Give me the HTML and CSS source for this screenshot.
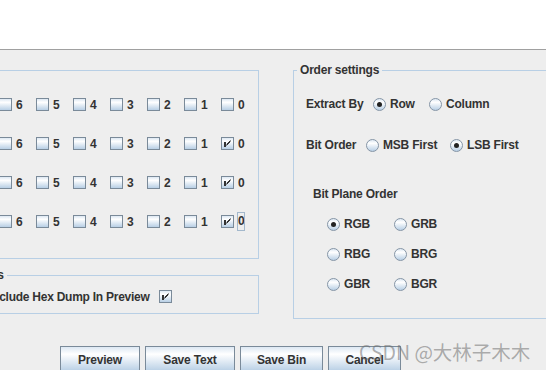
FILE: index.html
```html
<!DOCTYPE html>
<html lang="en">
<head>
    <meta charset="UTF-8">
    <meta name="viewport" content="width=device-width, initial-scale=1.0">
    <title>Extract Preview</title>
    <link rel="stylesheet" href="styles.css">
</head>
<body>
    <div class="preview"></div>

    <div class="settings">
        <div class="left-col">
            <div class="group bit-planes">
                <span class="group-title">Bit Planes</span>
                <div class="plane-row">
                    <span class="plane-name">Alpha</span>
                    <span class="bit"><span class="check"></span>7</span>
                    <span class="bit"><span class="check"></span>6</span>
                    <span class="bit"><span class="check"></span>5</span>
                    <span class="bit"><span class="check"></span>4</span>
                    <span class="bit"><span class="check"></span>3</span>
                    <span class="bit"><span class="check"></span>2</span>
                    <span class="bit"><span class="check"></span>1</span>
                    <span class="bit"><span class="check"></span>0</span>
                </div>
                <div class="plane-row">
                    <span class="plane-name">Red</span>
                    <span class="bit"><span class="check"></span>7</span>
                    <span class="bit"><span class="check"></span>6</span>
                    <span class="bit"><span class="check"></span>5</span>
                    <span class="bit"><span class="check"></span>4</span>
                    <span class="bit"><span class="check"></span>3</span>
                    <span class="bit"><span class="check"></span>2</span>
                    <span class="bit"><span class="check"></span>1</span>
                    <span class="bit"><span class="check"><svg width="11" height="11" viewBox="0 0 11 11"><path d="M2 4h2v5H2z" fill="#333"/><path d="M8.5 2.5L4.5 6.5M8.5 3.5L4.5 7.5" stroke="#333" fill="none"/></svg></span>0</span>
                </div>
                <div class="plane-row">
                    <span class="plane-name">Green</span>
                    <span class="bit"><span class="check"></span>7</span>
                    <span class="bit"><span class="check"></span>6</span>
                    <span class="bit"><span class="check"></span>5</span>
                    <span class="bit"><span class="check"></span>4</span>
                    <span class="bit"><span class="check"></span>3</span>
                    <span class="bit"><span class="check"></span>2</span>
                    <span class="bit"><span class="check"></span>1</span>
                    <span class="bit"><span class="check"><svg width="11" height="11" viewBox="0 0 11 11"><path d="M2 4h2v5H2z" fill="#333"/><path d="M8.5 2.5L4.5 6.5M8.5 3.5L4.5 7.5" stroke="#333" fill="none"/></svg></span>0</span>
                </div>
                <div class="plane-row">
                    <span class="plane-name">Blue</span>
                    <span class="bit"><span class="check"></span>7</span>
                    <span class="bit"><span class="check"></span>6</span>
                    <span class="bit"><span class="check"></span>5</span>
                    <span class="bit"><span class="check"></span>4</span>
                    <span class="bit"><span class="check"></span>3</span>
                    <span class="bit"><span class="check"></span>2</span>
                    <span class="bit"><span class="check"></span>1</span>
                    <span class="bit"><span class="check"><svg width="11" height="11" viewBox="0 0 11 11"><path d="M2 4h2v5H2z" fill="#333"/><path d="M8.5 2.5L4.5 6.5M8.5 3.5L4.5 7.5" stroke="#333" fill="none"/></svg></span><span class="focused">0</span></span>
                </div>
            </div>

            <div class="group preview-settings">
                <span class="group-title">Preview Settings</span>
                <span class="hex-label">Include Hex Dump In Preview</span>
                <span class="check"><svg width="11" height="11" viewBox="0 0 11 11"><path d="M2 4h2v5H2z" fill="#333"/><path d="M8.5 2.5L4.5 6.5M8.5 3.5L4.5 7.5" stroke="#333" fill="none"/></svg></span>
            </div>
        </div>

        <div class="group order-settings">
            <span class="group-title">Order settings</span>
            <div class="order-row">
                <span class="order-label extract-label">Extract By</span>
                <span class="choice row-choice"><span class="radio on"></span>Row</span>
                <span class="choice"><span class="radio"></span>Column</span>
            </div>
            <div class="order-row bit-order">
                <span class="order-label bit-label">Bit Order</span>
                <span class="choice msb-choice"><span class="radio"></span>MSB First</span>
                <span class="choice"><span class="radio on"></span>LSB First</span>
            </div>
            <div class="plane-order-label">Bit Plane Order</div>
            <div class="plane-grid">
                <span class="choice"><span class="radio on"></span>RGB</span>
                <span class="choice"><span class="radio"></span>GRB</span>
                <span class="choice"><span class="radio"></span>RBG</span>
                <span class="choice"><span class="radio"></span>BRG</span>
                <span class="choice"><span class="radio"></span>GBR</span>
                <span class="choice"><span class="radio"></span>BGR</span>
            </div>
        </div>
    </div>

    <div class="buttons">
        <button class="btn btn-preview">Preview</button>
        <button class="btn btn-text">Save Text</button>
        <button class="btn btn-bin">Save Bin</button>
        <button class="btn btn-cancel">Cancel</button>
    </div>

    <div class="watermark">CSDN @大林子木木</div>
</body>
</html>
```

FILE: styles.css
```css
html, body {
    margin: 0;
    overflow: hidden;
}
body {
    position: relative;
    width: 546px;
    height: 370px;
    background: #eeeeee;
    color: #333333;
    font-family: "Liberation Sans", Arial, sans-serif;
    font-size: 12px;
    font-weight: bold;
    line-height: 14px;
    letter-spacing: -0.2px;
}
.preview {
    height: 49px;
    background: #ffffff;
    border-bottom: 1px solid #a0a0a0;
}

/* main area: bit planes on the left, order settings on the right */
.settings {
    display: flex;
    align-items: flex-start;
    gap: 34px;
    margin-top: 20px;
    margin-left: -100px;
}
.left-col {
    width: 359px;
    flex-shrink: 0;
}
.group {
    position: relative;
    border: 1px solid #b8cfe5;
    box-sizing: border-box;
}
.group-title {
    position: absolute;
    top: -8px;
    left: 3px;
    padding: 0 3px;
    background: #eeeeee;
}

.bit-planes {
    padding: 14px 0 17px 6px;
}
.plane-row {
    display: flex;
    align-items: center;
    height: 39px;
}
.plane-name {
    width: 55px;
}
.bit {
    display: flex;
    align-items: center;
    gap: 4px;
    width: 37px;
}
.focused {
    display: inline-block;
    line-height: 17px;
    outline: 1px solid #a3b8cc;
}

.preview-settings {
    display: flex;
    align-items: center;
    height: 39px;
    margin-top: 16px;
    padding: 4px 0 0 88px;
}
.preview-settings .group-title {
    left: 7px;
}
.hex-label {
    width: 170px;
    white-space: nowrap;
    letter-spacing: -0.25px;
}

/* checkbox and radio icons */
.check {
    display: inline-block;
    flex-shrink: 0;
    width: 13px;
    height: 13px;
    box-sizing: border-box;
    border: 1px solid #7a8a99;
    background: linear-gradient(to bottom, #dde8f3 0%, #ffffff 30%, #b8cfe5 100%);
}
.check svg {
    display: block;
}
.radio {
    position: relative;
    display: inline-block;
    flex-shrink: 0;
    width: 13px;
    height: 13px;
    box-sizing: border-box;
    border: 1px solid #8595a6;
    border-radius: 50%;
    background: linear-gradient(to bottom, #dde8f3 0%, #ffffff 30%, #b8cfe5 100%);
}
.radio.on::after {
    content: "";
    position: absolute;
    left: 3px;
    top: 3px;
    width: 5px;
    height: 5px;
    border-radius: 50%;
    background: #222222;
}

/* order settings */
.order-settings {
    width: 300px;
    flex-shrink: 0;
    padding: 23px 0 24px 12px;
}
.order-row {
    display: flex;
    align-items: center;
    height: 20px;
}
.bit-order {
    margin-top: 21px;
}
.extract-label {
    width: 67px;
}
.bit-label {
    width: 60px;
}
.choice {
    display: flex;
    align-items: center;
    gap: 4px;
    white-space: nowrap;
}
.row-choice {
    width: 56px;
}
.msb-choice {
    width: 84px;
}
.plane-order-label {
    height: 20px;
    line-height: 20px;
    margin: 29px 0 0 7px;
}
.plane-grid {
    display: grid;
    grid-template-columns: 67px 67px;
    grid-auto-rows: 20px;
    row-gap: 10px;
    margin: 10px 0 0 21px;
}

/* dialog buttons */
.buttons {
    display: flex;
    gap: 5px;
    margin-top: 27px;
    padding-left: 60px;
}
.btn {
    height: 26px;
    padding: 1px 0 0;
    border: 1px solid #7a8a99;
    background: linear-gradient(to bottom, #dde8f3 0%, #ffffff 30%, #b8cfe5 100%);
    color: #333333;
    font-family: "Liberation Sans", Arial, sans-serif;
    font-size: 12px;
    font-weight: bold;
    letter-spacing: -0.2px;
}
.btn-preview { width: 80px; }
.btn-text { width: 90px; }
.btn-bin { width: 83px; }
.btn-cancel { width: 73px; }

.watermark {
    position: absolute;
    left: 359px;
    top: 340px;
    font-family: "Noto Sans CJK SC", sans-serif;
    font-size: 19.5px;
    font-weight: normal;
    line-height: 24px;
    letter-spacing: 0;
    color: rgba(110, 110, 110, 0.55);
    white-space: nowrap;
}
```
